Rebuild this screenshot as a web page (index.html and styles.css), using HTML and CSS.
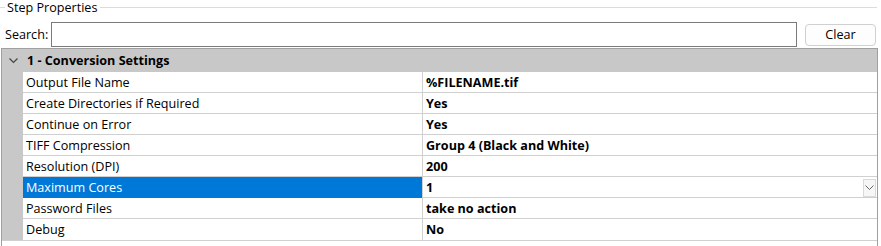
FILE: index.html
```html
<!DOCTYPE html>
<html lang="en">
<head>
    <meta charset="UTF-8" />
    <title>Step Properties</title>
    <link rel="stylesheet" href="styles.css">
</head>
<body>
    <div class="group-title">
        <span class="rule short"></span>
        <span class="caption">Step Properties</span>
        <span class="rule"></span>
    </div>

    <div class="search-bar">
        <label for="search">Search:</label>
        <input type="text" id="search" />
        <button class="clear">Clear</button>
    </div>

    <div class="grid">
        <div class="category">
            <svg class="chevron" width="9" height="6" viewBox="0 0 9 6"><path d="M0.5 0.5 L4.5 4.5 L8.5 0.5" fill="none" stroke="#444" stroke-width="1.2"/></svg>
            <span>1 - Conversion Settings</span>
        </div>
        <div class="grid-body">
            <div class="margin"></div>
            <div class="rows">
                <div class="row"><div class="name">Output File Name</div><div class="value">%FILENAME.tif</div></div>
                <div class="row"><div class="name">Create Directories if Required</div><div class="value">Yes</div></div>
                <div class="row"><div class="name">Continue on Error</div><div class="value">Yes</div></div>
                <div class="row"><div class="name">TIFF Compression</div><div class="value">Group 4 (Black and White)</div></div>
                <div class="row"><div class="name">Resolution (DPI)</div><div class="value">200</div></div>
                <div class="row selected">
                    <div class="name">Maximum Cores</div>
                    <div class="value">
                        <span>1</span>
                        <span class="drop"><svg width="9" height="5" viewBox="0 0 9 5"><path d="M0.5 0.5 L4.5 4.5 L8.5 0.5" fill="none" stroke="#666" stroke-width="1"/></svg></span>
                    </div>
                </div>
                <div class="row"><div class="name">Password Files</div><div class="value">take no action</div></div>
                <div class="row"><div class="name">Debug</div><div class="value">No</div></div>
            </div>
        </div>
    </div>
</body>
</html>
```

FILE: styles.css
```css
body {
    margin: 0;
    font-family: "Open Sans", "Noto Sans", sans-serif;
    font-size: 12.6px;
    color: #000;
    background: #fff;
    width: 881px;
    height: 246px;
    overflow: hidden;
}
.group-title {
    display: flex;
    align-items: center;
    height: 15px;
    margin-right: 4px;
}
.group-title .rule {
    flex: 1;
    height: 1px;
    background: #dcdcdc;
}
.group-title .rule.short {
    flex: 0 0 5px;
}
.group-title .caption {
    padding: 0 3px 0 2px;
    line-height: 15px;
}
.search-bar {
    display: flex;
    align-items: center;
    height: 25px;
    margin-top: 7px;
    padding-left: 5px;
}
.search-bar label {
    width: 46px;
}
.search-bar input {
    width: 746px;
    height: 25px;
    box-sizing: border-box;
    border: 1px solid #7a7a7a;
    margin: 0;
    padding: 0 4px;
    font: inherit;
}
.clear {
    margin-left: 8px;
    width: 71px;
    height: 22px;
    border: 1px solid #d0d0d0;
    border-radius: 4px;
    background: #fdfdfd;
    font: inherit;
    padding: 0;
    color: #000;
}
.grid {
    margin: 1px 0 0 1px;
    width: 877px;
    box-sizing: border-box;
    border: 1px solid #a0a0a0;
    border-bottom: none;
    height: 198px;
}
.category {
    display: flex;
    align-items: center;
    height: 23px;
    background: #c8c8c8;
    font-weight: bold;
}
.category .chevron {
    margin: 1px 0 0 7px;
    width: 9px;
}
.category span {
    margin-left: 9px;
}
.grid-body {
    display: flex;
    border-bottom: 1px solid #d0d0d0;
}
.margin {
    width: 21px;
    background: #c8c8c8;
}
.rows {
    flex: 1;
}
.row {
    display: grid;
    grid-template-columns: 400px 1fr;
    height: 21px;
    box-sizing: border-box;
    border-bottom: 1px solid #d0d0d0;
}
.row:last-child {
    border-bottom: none;
}
.name, .value {
    line-height: 21px;
    padding-left: 3px;
    white-space: nowrap;
}
.name {
    border-right: 1px solid #d0d0d0;
}
.value {
    font-weight: bold;
    display: flex;
    align-items: center;
}
.value span:first-child {
    flex: 1;
}
.selected .name {
    background: #0078d7;
    color: #fff;
}
.drop {
    width: 13px;
    height: 18px;
    margin-right: 1px;
    box-sizing: border-box;
    border: 1px solid #dadada;
    background: #f6f6f6;
    display: flex;
    align-items: center;
    justify-content: center;
}
```
